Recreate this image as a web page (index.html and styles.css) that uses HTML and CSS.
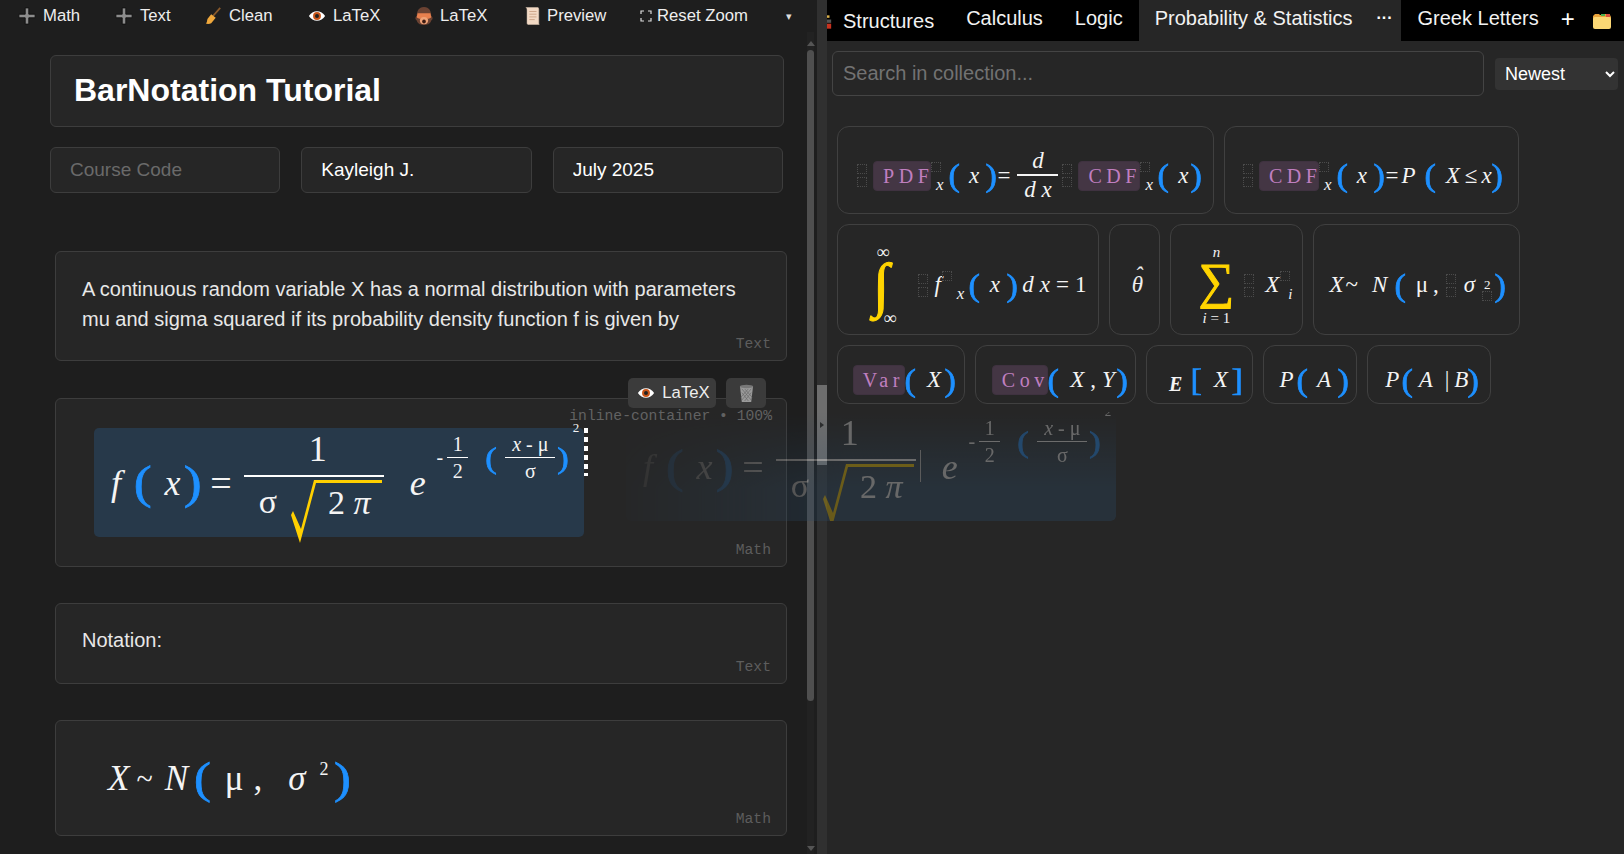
FILE: index.html
```html
<!DOCTYPE html>
<html>
  <head>
    <meta charset="utf-8">
    <title>BarNotation Tutorial</title>
    <link rel="stylesheet" href="styles.css">
  </head>
  <body>
    <div id="app">
      <div id="left">
        <div id="toolbar">
          <button class="tool t-math"><svg class="ico" viewBox="0 0 20 20"><path d="M8 1h4v7h7v4h-7v7H8v-7H1V8h7z" fill="#8c8c8c" stroke="#111" stroke-width="1"/></svg>Math</button>
          <button class="tool t-text"><svg class="ico" viewBox="0 0 20 20"><path d="M8 1h4v7h7v4h-7v7H8v-7H1V8h7z" fill="#8c8c8c" stroke="#111" stroke-width="1"/></svg>Text</button>
          <button class="tool t-clean"><svg class="ico" viewBox="0 0 20 20"><path d="M18 1 10 10" stroke="#8a5a2b" stroke-width="2"/><path d="M8 8l5 4-5 6c-2 1-5 1-6 0 2-1 1-3 2-5z" fill="#f0a83c"/></svg>Clean</button>
          <button class="tool t-eye"><svg class="ico" viewBox="0 0 20 14"><path d="M1 7c4-7 14-7 18 0-4 7-14 7-18 0z" fill="#fff"/><circle cx="10" cy="7" r="4.4" fill="#c9561a"/><circle cx="10" cy="7" r="2.2" fill="#222"/></svg>LaTeX</button>
          <button class="tool t-monkey"><svg class="ico" viewBox="0 0 22 22"><path d="M11 1c6 0 8 5 8 10 2 1 2 4 0 5-1 4-5 5-8 5s-7-1-8-5c-2-1-2-4 0-5 0-5 2-10 8-10z" fill="#6b4232"/><path d="M4 8h14l1 4c0 1-3 2-4 2H7c-1 0-4-1-4-2z" fill="#e8804e"/><ellipse cx="11" cy="16" rx="4.5" ry="4" fill="#f0a377"/><ellipse cx="11" cy="17" rx="2" ry="2.2" fill="#3a1a12"/></svg>LaTeX</button>
          <button class="tool t-preview"><svg class="ico" viewBox="0 0 20 22"><path d="M2 1h14c2 0 2 2 2 3v15c0 1 1 2 1 2H6c-2 0-2-2-2-3V4c0-1-1-3-2-3z" fill="#f2d9c4" stroke="#222" stroke-width=".7"/><path d="M7 6h8M7 9h8M7 12h8M7 15h6" stroke="#c9a184"/></svg>Preview</button>
          <button class="tool t-reset"><svg class="ico-focus" viewBox="0 0 12 12"><path d="M1 4V1h3M8 1h3v3M11 8v3H8M4 11H1V8" fill="none" stroke="#ddd" stroke-width="1.2"/></svg>Reset Zoom</button>
          <span class="caret">▾</span>
        </div>

        <div id="doc">
          <div class="title-box">BarNotation Tutorial</div>
          <div class="meta">
            <input class="meta-input" placeholder="Course Code">
            <input class="meta-input" value="Kayleigh J.">
            <input class="meta-input" value="July 2025">
          </div>

          <div class="block block-text first">
            <p>A continuous random variable X has a normal distribution with parameters<br>mu and sigma squared if its probability density function f is given by</p>
            <span class="tag">Text</span>
          </div>

          <div class="block block-formula">
            <div class="float-tools">
              <button class="float-btn"><svg class="ico" viewBox="0 0 20 14"><path d="M1 7c4-7 14-7 18 0-4 7-14 7-18 0z" fill="#fff"/><circle cx="10" cy="7" r="4.4" fill="#c9561a"/><circle cx="10" cy="7" r="2.2" fill="#222"/></svg>LaTeX</button>
              <button class="float-btn float-trash"><svg viewBox="0 0 16 20" width="15" height="19"><path d="M1 2h14l-2 17H3z" fill="#9a9a9a"/><path d="M3 5l10 12M6 5l8 9M3 9l7 9M13 5L3 17M10 5L2 14M13 9l-7 9" stroke="#666" stroke-width=".7"/><ellipse cx="8" cy="2.5" rx="7" ry="1.8" fill="#777"/></svg></button>
            </div>
            <span class="scale-tag">inline-container • 100%</span>
            <div class="formula-box">
              <div class="math math-big">
                <i class="f">f</i><span class="par">(</span><i class="gap-l">x</i><span class="par">)</span><span class="eq">=</span>
                <span class="frac main-frac">
                  <span class="num">1</span>
                  <span class="den"><span class="sig">σ</span><span class="root"><svg class="root-svg" viewBox="0 0 92 66" width="92" height="66"><polygon points="1,36 3,32 11,50 24,1 92,1 92,4 26,4 10,64" fill="#ffd000"/></svg>2 <i>π</i></span></span>
                </span>
                <i class="e">e</i>
                <span class="expo">
                  <span class="minus">-</span>
                  <span class="frac small-frac"><span class="num">1</span><span class="den">2</span></span>
                  <span class="par par-s">(</span>
                  <span class="frac small-frac wide"><span class="num"><i>x</i> - μ</span><span class="den">σ</span></span>
                  <span class="par par-e">)</span>
                  <span class="two">2</span>
                </span>
              </div>
            </div>
            <span class="tag">Math</span>
          </div>

          <div class="block block-note">
            <p>Notation:</p>
            <span class="tag">Text</span>
          </div>

          <div class="block block-math2">
            <div class="math math-two"><i>X</i><span class="tilde">~</span><i>N</i><span class="par par-open">(</span><span class="mu">μ</span><span class="comma">,</span><span class="sg">σ</span><sup>2</sup><span class="par">)</span></div>
            <span class="tag">Math</span>
          </div>
        </div>

        <div id="left-scroll">
          <span class="arrow-up"></span>
          <span class="thumb"></span>
          <span class="arrow-down"></span>
        </div>
      </div>

      <div id="splitter"><span class="split-thumb"><span class="split-arrow"></span></span></div>

      <div id="right">
        <div id="tabs">
          <svg class="tab-clip" viewBox="0 0 6 20"><path d="M0 2h3v3H0z" fill="#d9b04a"/><path d="M0 7h5v4H0z" fill="#555"/><path d="M0 12h5v6H0z" fill="#c8321f"/></svg>
          <span class="tab tab-low">Structures</span>
          <span class="tab">Calculus</span>
          <span class="tab">Logic</span>
          <span class="tab tab-on">Probability &amp; Statistics</span>
          <span class="tab-more">···</span>
          <span class="tab tab-greek">Greek Letters</span>
          <span class="tab-add">+</span>
          <svg class="tab-folder" viewBox="0 0 20 18"><path d="M1 4l2-2h4l1 1h3l1-1h2l1 1h3l1 2v2H1z" fill="#e9a33a"/><path d="M9 2h4v2H9z" fill="#4caf50"/><path d="M14 2h4v3h-4z" fill="#d9503f"/><rect x="1" y="5" width="18" height="12" rx="2" fill="#fbd774"/></svg>
        </div>
        <div class="search-row">
          <input class="search" placeholder="Search in collection...">
          <select class="sort"><option>Newest</option><option>Oldest</option></select>
        </div>

        <div class="gallery">
          <div class="row">
            <div class="card w-376 h-87 card-pdf">
              <div class="math math-s">
                <span class="tofu"><b></b><b></b></span>
                <span class="chip chip-pdf">PDF</span><span class="tofu-one"></span><i class="sub sub-x">x</i><span class="par">(</span><i class="gap-s">x</i><span class="par">)</span><span class="eq-t">=</span>
                <span class="frac s-frac"><span class="num"><i>d</i></span><span class="den"><i>d</i> <i>x</i></span></span>
                <span class="tofu t-l"><b></b><b></b></span>
                <span class="chip chip-cdf">CDF</span><span class="tofu-one"></span><i class="sub sub-x">x</i><span class="par">(</span><i class="gap-e">x</i><span class="par">)</span>
              </div>
            </div>
            <div class="card w-294 h-87 card-cdf">
              <div class="math math-s">
                <span class="tofu"><b></b><b></b></span>
                <span class="chip chip-cdf2">CDF</span><span class="tofu-one"></span><i class="sub sub-x">x</i><span class="par">(</span><i class="gap-s">x</i><span class="par">)</span><span class="eq-t">=</span><i class="p-c">P</i><span class="par">(</span><i class="gap-s">X</i><span class="le">≤</span><i>x</i><span class="par">)</span>
              </div>
            </div>
          </div>

          <div class="row">
            <div class="card w-262 h-111 card-int">
              <div class="math math-s">
                <span class="big-op int"><span class="lim-up">∞</span><span class="int-sign">∫</span><span class="lim-dn">∞</span></span>
                <span class="tofu t-l2"><b></b><b></b></span>
                <i class="gap-f">f</i><span class="tofu-one high"></span><i class="sub sub-f">x</i><span class="par">(</span><i class="gap-s">x</i><span class="par">)</span><i class="gap-d">d</i><i class="gap-x">x</i><span class="eq-s">=</span><span>1</span>
              </div>
            </div>
            <div class="card w-51 h-111 card-theta"><div class="math math-s"><i class="theta">θ</i></div></div>
            <div class="card w-133 h-111 card-sum">
              <div class="math math-s">
                <span class="big-op sum"><i class="sum-n">n</i><span class="sum-sign">∑</span><span class="sum-i"><i>i</i> = 1</span></span>
                <span class="tofu t-l3"><b></b><b></b></span>
                <i class="gap-f">X</i><span class="tofu-one high"></span><i class="sub sub-i">i</i>
              </div>
            </div>
            <div class="card w-207 h-111 card-n">
              <div class="math math-s">
                <i>X</i><span class="tilde-s">~</span><i class="n-s">N</i><span class="par">(</span><span class="gap-m">μ</span><span class="comma-s">,</span><span class="tofu t-s"><b></b><b></b></span><i class="sg-s">σ</i><span class="sup-stack"><span class="sup-two">2</span><span class="tofu-one"></span></span><span class="par">)</span>
              </div>
            </div>
          </div>

          <div class="row">
            <div class="card w-128 h-59 card-var"><div class="math math-s"><span class="chip chip-var">Var</span><span class="par">(</span><i class="gap-xs">X</i><span class="par">)</span></div></div>
            <div class="card w-161 h-59 card-cov"><div class="math math-s"><span class="chip chip-cov">Cov</span><span class="par">(</span><i class="gap-xs">X</i><span class="comma-c">,</span><i class="y-s">Y</i><span class="par">)</span></div></div>
            <div class="card w-107 h-59 card-e"><div class="math math-s"><b class="bb-e">E</b><span class="par par-sq">[</span><i class="gap-xs">X</i><span class="par par-sq">]</span></div></div>
            <div class="card w-94 h-59 card-p"><div class="math math-s"><i class="p-s">P</i><span class="par">(</span><i class="gap-s">A</i><span class="par">)</span></div></div>
            <div class="card w-124 h-59 card-p2"><div class="math math-s"><i class="p-s">P</i><span class="par">(</span><i class="gap-a">A</i><span class="pipe">|</span><i>B</i><span class="par">)</span></div></div>
          </div>
        </div>
      </div>
    </div>

    <!-- drag preview, floats over both panes -->
    <div id="ghost">
      <div class="math math-big">
        <i class="f">f</i><span class="par">(</span><i class="gap-l">x</i><span class="par">)</span><span class="eq">=</span>
        <span class="frac main-frac">
          <span class="num">1</span>
          <span class="den"><span class="sig">σ</span><span class="root"><svg class="root-svg" viewBox="0 0 92 66" width="92" height="66"><polygon points="1,36 3,32 11,50 24,1 92,1 92,4 26,4 10,64" fill="#ffd000"/></svg>2 <i>π</i></span></span>
        </span>
        <span class="ghost-caret"></span>
        <i class="e">e</i>
        <span class="expo">
          <span class="minus">-</span>
          <span class="frac small-frac"><span class="num">1</span><span class="den">2</span></span>
          <span class="par par-s">(</span>
          <span class="frac small-frac wide"><span class="num"><i>x</i> - μ</span><span class="den">σ</span></span>
          <span class="par par-e">)</span>
          <span class="two">2</span>
        </span>
      </div>
    </div>
  </body>
</html>
```

FILE: styles.css
```css
* {
  box-sizing: border-box;
}

html, body {
  margin: 0;
  height: 100%;
  overflow: hidden;
  background: #1e1e1e;
  color: #fff;
  font-family: "Liberation Sans", Arial, sans-serif;
}

#app {
  display: flex;
  height: 854px;
}

/* left pane */
#left {
  width: 817px;
  flex: none;
  position: relative;
  background: #1e1e1e;
}

#toolbar {
  display: flex;
  align-items: center;
  height: 32px;
  padding-left: 18px;
  font-size: 16.7px;
}

.tool {
  display: flex;
  align-items: center;
  padding: 0;
  border: 0;
  background: none;
  color: #eee;
  font: inherit;
  white-space: nowrap;
}

.ico {
  width: 18px;
  height: 18px;
  margin-right: 7px;
  flex: none;
}

.ico-focus {
  width: 12px;
  height: 12px;
  margin-right: 5px;
}

.t-math { width: 97px; }
.t-text { width: 89px; }
.t-clean { width: 104px; }
.t-eye { width: 106px; }
.t-monkey { width: 109px; }
.t-preview { width: 117px; }
.t-reset { width: 146px; }
.t-monkey .ico { width: 20px; height: 20px; margin-right: 6px; }
.t-preview .ico { height: 20px; margin-right: 6px; }

.caret {
  font-size: 11px;
  color: #ddd;
}

#doc {
  padding: 23px 0 0 50px;
  width: 807px;
}

.title-box {
  width: 734px;
  height: 72px;
  padding-left: 23px;
  background: #262626;
  border: 1px solid #3d3d3d;
  border-radius: 6px;
  font-size: 32px;
  font-weight: 700;
  line-height: 68px;
}

.meta {
  display: flex;
  gap: 21px;
  margin-top: 20px;
  width: 733px;
}

.meta-input {
  flex: 1;
  min-width: 0;
  height: 46px;
  padding: 0 19px;
  background: #262626;
  border: 1px solid #3d3d3d;
  border-radius: 6px;
  color: #fff;
  font: 19px "Liberation Sans", Arial, sans-serif;
  outline: none;
}

.meta-input::placeholder {
  color: #6a6a6a;
}

.block {
  position: relative;
  width: 732px;
  margin-left: 5px;
  background: #262626;
  border: 1px solid #3d3d3d;
  border-radius: 6px;
}

.block p {
  margin: 0;
  font-size: 20px;
  line-height: 30px;
  color: #e8e8e8;
}

.block-text {
  height: 110px;
  padding: 22px 26px 0;
}

.first {
  margin-top: 58px;
}

.block-formula {
  height: 169px;
  margin-top: 37px;
  padding: 29px 0 0 38px;
}

.block-note {
  height: 81px;
  margin-top: 36px;
  padding: 21px 26px 0;
}

.block-math2 {
  height: 116px;
  margin-top: 36px;
  padding: 30px 0 0 52px;
}

.tag {
  position: absolute;
  right: 15px;
  bottom: 8px;
  font: 14.7px "Liberation Mono", monospace;
  color: #5d5d5d;
}

.scale-tag {
  position: absolute;
  top: 9px;
  right: 14px;
  font: 14.7px "Liberation Mono", monospace;
  color: #626262;
}

.float-tools {
  position: absolute;
  top: -21px;
  right: 20px;
  display: flex;
  gap: 10px;
  z-index: 3;
}

.float-btn {
  display: flex;
  align-items: center;
  justify-content: center;
  width: 88px;
  height: 30px;
  padding: 0 0 0 3px;
  border: 0;
  border-radius: 5px;
  background: #3b3b3b;
  color: #eee;
  font: 16.7px "Liberation Sans", Arial, sans-serif;
}

.float-trash {
  width: 40px;
  padding: 0;
}

.formula-box {
  position: relative;
  width: 490px;
  height: 109px;
  background: #27394a;
  border-radius: 5px;
}

.formula-box::after {
  content: "";
  position: absolute;
  top: 0;
  left: 490px;
  width: 4px;
  height: 48px;
  background: repeating-linear-gradient(to bottom, #fff 0, #fff 5px, transparent 5px, transparent 9px);
}

/* math */
.math {
  display: flex;
  align-items: center;
  font-family: "Liberation Serif", "Times New Roman", serif;
  color: #f4f4f4;
  white-space: nowrap;
}

.par {
  color: #1e90ff;
  font-size: 1.3em;
  line-height: 1;
  font-weight: 400;
  transform: scaleX(1.15);
  -webkit-text-stroke: .7px #1e90ff;
}

.math-big {
  font-size: 36px;
  height: 109px;
  padding-left: 17px;
  position: relative;
}

.math-big .f { margin-right: 14px; }
.math-big .gap-l { margin: 0 4px 0 14px; }
.math-big .eq { margin: 0 12px 0 10px; font-size: 38px; }

.frac {
  display: inline-flex;
  flex-direction: column;
  align-items: center;
}

.frac .num, .frac .den {
  display: block;
  text-align: center;
}

.main-frac {
  width: 140px;
  margin-top: -9px;
}

.main-frac .num {
  line-height: 37px;
  font-size: 36px;
  padding: 0 0 7px 8px;
}

.main-frac .den {
  width: 100%;
  border-top: 2px solid #fff;
  height: 50px;
  display: flex;
  padding-left: 15px;
  line-height: 50px;
  font-size: 34px;
}

.root {
  position: relative;
  display: block;
  margin-left: 12px;
  padding-left: 39px;
  margin-top: 1px;
}

.root-svg {
  position: absolute;
  left: 1px;
  top: 1px;
}

.math-big .e {
  margin: 0 11px 0 26px;
  font-size: 36px;
}

.expo {
  display: flex;
  align-items: center;
  font-size: 20px;
  margin-top: -50px;
  position: relative;
}

.minus {
  margin-right: 4px;
}

.small-frac {
  width: 21px;
}

.small-frac .num, .small-frac .den {
  line-height: 26px;
}

.small-frac .den {
  width: 100%;
  border-top: 1px solid #fff;
}

.small-frac.wide {
  width: 50px;
}

.par-s {
  font-size: 30px;
  margin: 0 9px 0 18px;
}

.par-e {
  font-size: 30px;
  margin-left: 3px;
}

.two {
  position: absolute;
  top: -11px;
  right: -11px;
  font-size: 13px;
}

.math-two {
  font-size: 35px;
  height: 56px;
}

.math-two .par { font-size: 44px; }
.math-two .par-open { margin-left: 7px; }
.tilde { margin: 0 12px 0 7px; font-size: 30px; }
.math-two .mu { margin-left: 15px; }
.comma { margin-left: 10px; }
.sg { margin-left: 26px; font-style: italic; }
.math-two sup { font-size: 18px; margin: -20px 7px 0 14px; line-height: 1; }

/* splitter */
#left-scroll {
  position: absolute;
  top: 32px;
  bottom: 0;
  left: 807px;
  width: 7px;
  background: #222;
}

.thumb {
  position: absolute;
  top: 18px;
  left: 0;
  width: 7px;
  height: 651px;
  border-radius: 4px;
  background: #4f4f4f;
}

.arrow-up, .arrow-down {
  position: absolute;
  left: 0;
  border-left: 4px solid transparent;
  border-right: 4px solid transparent;
}

.arrow-up {
  top: 9px;
  border-bottom: 5px solid #555;
}

.arrow-down {
  bottom: 3px;
  border-top: 5px solid #555;
}

#splitter {
  position: relative;
  width: 10px;
  flex: none;
  background: #303030;
}

.split-thumb {
  position: absolute;
  top: 385px;
  left: 0;
  width: 10px;
  height: 80px;
  background: #6e6e6e;
}

.split-arrow {
  position: absolute;
  top: 37px;
  left: 3px;
  border-top: 3px solid transparent;
  border-bottom: 3px solid transparent;
  border-left: 4px solid #2c2c2c;
}

/* right pane */
#right {
  flex: 1;
  min-width: 0;
  background: #262626;
}

#tabs {
  display: flex;
  align-items: center;
  height: 41px;
  background: #000;
  font-size: 20px;
  white-space: nowrap;
}

.tab-clip {
  width: 5px;
  height: 20px;
  flex: none;
  margin-top: 2px;
}

.tab {
  display: flex;
  flex: none;
  align-items: center;
  height: 41px;
  padding: 0 16px 5px;
  color: #f2f2f2;
  line-height: 1;
}

.tab-low {
  padding: 0 16px 0 11px;
}

.tab-on {
  background: #262626;
}

.tab-more {
  flex: none;
  width: 32px;
  text-align: center;
  font-weight: 700;
  font-size: 16px;
  line-height: 36px;
  height: 41px;
  background: #262626;
}

.tab-greek {
  padding-left: 17px;
}

.tab-add {
  flex: none;
  margin-left: 6px;
  font-size: 24px;
  margin-top: -4px;
}

.tab-folder {
  flex: none;
  width: 20px;
  height: 18px;
  margin-left: 17px;
}

.search-row {
  display: flex;
  align-items: center;
  padding: 10px 6px 0 5px;
}

.search {
  width: 652px;
  height: 45px;
  padding: 0 10px;
  background: #262626;
  border: 1px solid #444;
  border-radius: 6px;
  color: #fff;
  font: 20px "Liberation Sans", Arial, sans-serif;
  outline: none;
}

.search::placeholder {
  color: #727272;
}

.sort {
  width: 123px;
  height: 32px;
  margin-left: 11px;
  padding-left: 6px;
  background: #333;
  border: 0;
  border-radius: 4px;
  color: #fff;
  font: 18px "Liberation Sans", Arial, sans-serif;
}

.gallery {
  display: flex;
  flex-direction: column;
  gap: 10px;
  padding: 30px 0 0 10px;
}

.row {
  display: flex;
  gap: 10px;
}

.card {
  display: flex;
  align-items: center;
  justify-content: center;
  padding-top: 11px;
  border: 1px solid #404040;
  border-radius: 12px;
  background: #262626;
}

.w-376 { width: 377px; }
.w-294 { width: 295px; }
.w-262 { width: 262px; }
.w-51 { width: 51px; }
.w-133 { width: 133px; }
.w-207 { width: 207px; }
.w-128 { width: 128px; }
.w-161 { width: 161px; }
.w-107 { width: 107px; }
.w-94 { width: 94px; }
.w-124 { width: 124px; }
.h-87 { height: 88px; }
.h-111 { height: 111px; }
.h-59 { height: 59px; }

.card-pdf { padding-left: 7px; }
.card-cdf { padding-left: 2px; }
.card-int { padding-left: 16px; }
.card-theta { padding-left: 6px; }
.card-sum { padding-left: 18px; }
.card-n { padding-left: 2px; }
.card-var { padding-left: 6px; }
.card-cov { padding-left: 8px; }
.card-e { padding-left: 12px; }
.card-p { padding-left: 8px; }
.card-p2 { padding-left: 6px; }

.math-s {
  font-size: 23px;
}

.math-s .par {
  font-size: 31px;
  transform: scaleX(1.1);
}

.gap-s { margin: 0 7px 0 10px; }
.gap-e { margin: 0 2px 0 10px; }
.gap-a { margin: 0 7px 0 6px; }
.gap-m { margin: 0 3px 0 10px; }
.gap-xs { margin: 0 4px 0 12px; }
.eq-s { margin: 0 6px; }
.eq-t { margin: 0 7px 0 1px; }
.le { margin: 0 4px 0 -2px; }
.p-s { margin-right: 3px; }
.p-c { margin: 0 10px 0 -4px; }
.sub { font-size: 17px; margin-top: 18px; }
.sub-x { margin-left: -5px; margin-right: 5px; }
.sub-f { margin-left: 5px; margin-right: 5px; }
.sub-i { margin-left: -2px; font-size: 15px; }

.tofu {
  display: inline-flex;
  flex-direction: column;
  gap: 3px;
  margin-right: 6px;
}

.tofu b, .tofu-one {
  display: block;
  width: 10px;
  height: 10px;
  border: 1px dotted #4b4b4b;
}

.tofu-one {
  margin-bottom: 18px;
}

.tofu-one.high {
  margin: 0 0 18px 1px;
}

.t-l {
  margin-left: 4px;
}

.t-l2 {
  margin-left: 22px;
  margin-right: 4px;
}

.t-l3 {
  margin-left: 10px;
  margin-right: 9px;
}

.t-s {
  margin: 0 4px;
}

.chip {
  display: inline-block;
  height: 30px;
  line-height: 29px;
  padding-left: 9px;
  background: #443644;
  border: 1px solid #3f3240;
  border-radius: 4px;
  color: #c07fc0;
  letter-spacing: 4.5px;
  font-size: 20px;
}

.chip-pdf { width: 58px; }
.chip-cdf { width: 62px; }
.chip-cdf2 { width: 60px; }
.chip-var { width: 52px; }
.chip-cov { width: 56px; }

.s-frac {
  width: 41px;
  margin-top: -2px;
}

.s-frac .num, .s-frac .den {
  line-height: 27px;
}

.s-frac .den {
  width: 100%;
  border-top: 2px solid #f4f4f4;
}

.big-op {
  display: inline-flex;
  flex-direction: column;
  align-items: center;
  position: relative;
}

.int-sign {
  color: #ffd400;
  font-size: 60px;
  line-height: 52px;
  font-style: italic;
  -webkit-text-stroke: 1px #ffd400;
}

.lim-up, .lim-dn {
  font-size: 18px;
  line-height: 14px;
}

.lim-up { margin-left: 4px; }
.lim-dn { margin-left: 18px; }

.sum-sign {
  color: #ffd400;
  font-size: 50px;
  line-height: 50px;
  transform: translateY(-4px);
  -webkit-text-stroke: 1px #ffd400;
}

.sum-n, .sum-i {
  font-size: 15px;
  line-height: 16px;
}

.gap-f { margin-left: 2px; }
.gap-d { margin-left: 5px; }
.gap-x { margin-left: 6px; }

.theta {
  position: relative;
  color: #eee;
}

.theta::before {
  content: "ˆ";
  position: absolute;
  top: -9px;
  left: 3px;
}

.tilde-s { margin: 0 14px 0 2px; }
.n-s { margin-right: 8px; }
.comma-s { margin: 0 3px 0 2px; }
.comma-c { margin: 0 6px 0 2px; }
.y-s { margin-right: 2px; }
.sg-s { margin: 0 7px 0 4px; }
.pipe { margin: 0 5px; }

.sup-stack {
  display: inline-flex;
  flex-direction: column;
  align-items: center;
  margin-right: 3px;
}

.sup-stack .tofu-one {
  margin: 0 0 -10px;
}

.sup-two {
  font-size: 13px;
  line-height: 12px;
}

.par-sq {
  transform: none;
}

.bb-e {
  font-style: italic;
  margin: 8px 9px 0 0;
  font-size: 20px;
}

/* drag ghost */
#ghost {
  position: absolute;
  top: 412px;
  left: 626px;
  width: 490px;
  height: 109px;
  background: linear-gradient(to bottom, rgba(43, 74, 102, 0), #2b4a66 70%);
  border-radius: 5px;
  opacity: .32;
  -webkit-mask-image: linear-gradient(to right, rgba(0, 0, 0, .12), #000 45%);
  mask-image: linear-gradient(to right, rgba(0, 0, 0, .12), #000 45%);
  z-index: 5;
  pointer-events: none;
}

.ghost-caret {
  position: absolute;
  left: 294px;
  top: 38px;
  height: 32px;
  border-left: 1px solid #ccc;
}
```
